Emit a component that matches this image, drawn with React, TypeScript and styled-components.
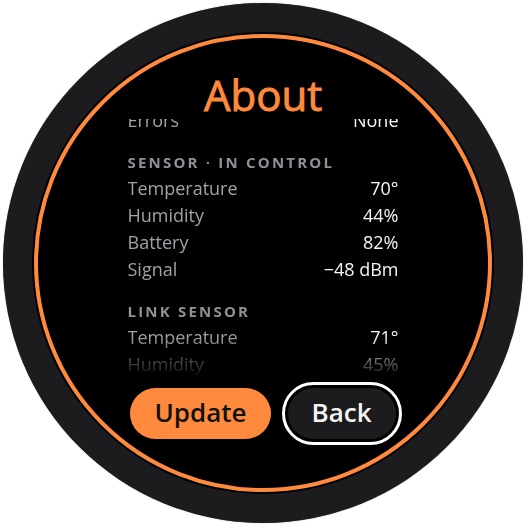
import React, { useLayoutEffect, useRef } from 'react';
import styled, { createGlobalStyle, css } from 'styled-components';

const palette = {
  bezel: '#1c1c1e',
  accent: '#ff8a3d',
  label: '#a0a2a8',
  heading: '#8f9198',
  value: '#f5f5f5',
  ink: '#111111',
};

const GlobalStyle = createGlobalStyle`
  html, body {
    margin: 0;
    padding: 0;
    background: #ffffff;
  }
  body {
    font-family: 'Open Sans', 'Noto Sans', sans-serif;
    -webkit-font-smoothing: antialiased;
  }
`;

const Stage = styled.div`
  width: 526px;
  height: 526px;
  display: flex;
  align-items: center;
  justify-content: center;
`;

const Bezel = styled.div`
  width: 520px;
  height: 520px;
  border-radius: 50%;
  background: ${palette.bezel};
  box-shadow: 0 0 1px rgba(0, 0, 0, 0.5);
  display: flex;
  align-items: center;
  justify-content: center;
`;

const Screen = styled.div`
  box-sizing: border-box;
  width: 458px;
  height: 458px;
  border-radius: 50%;
  border: 4px solid ${palette.accent};
  box-shadow: 0 0 0 2px #000;
  background: #000;
  padding-top: 33px;
  overflow: hidden;
  display: flex;
  flex-direction: column;
  align-items: center;
`;

const Title = styled.h1`
  margin: 0;
  font-size: 42px;
  line-height: 48px;
  font-weight: 500;
  color: ${palette.accent};
  -webkit-text-stroke: 0.9px ${palette.accent};
`;

const ListViewport = styled.div`
  width: 271px;
  height: 261px;
  overflow-y: auto;
  scrollbar-width: none;
  mask-image: linear-gradient(to bottom, #000 calc(100% - 44px), transparent 100%);
  &::-webkit-scrollbar {
    display: none;
  }
`;

const Section = styled.section`
  &:not(:first-child) {
    margin-top: 16px;
  }
`;

const SectionHeading = styled.h2`
  margin: 0;
  height: 25px;
  display: flex;
  align-items: center;
  font-size: 15px;
  font-weight: 700;
  letter-spacing: 2.2px;
  text-transform: uppercase;
  color: ${palette.heading};
`;

const Row = styled.div`
  height: 27px;
  display: flex;
  align-items: center;
  justify-content: space-between;
  font-size: 18px;
`;

const Label = styled.span`
  color: ${palette.label};
`;

const Value = styled.span`
  color: ${palette.value};
  font-weight: 500;
`;

const Actions = styled.div`
  margin-top: 8px;
  display: flex;
  align-items: center;
  gap: 17px;
`;

const Button = styled.button<{ variant: 'primary' | 'secondary'; focused?: boolean }>`
  height: 51px;
  padding: 0 24px 3px;
  border: none;
  border-radius: 26px;
  font-family: inherit;
  font-size: 26px;
  font-weight: 600;
  cursor: pointer;
  ${props =>
    props.variant === 'primary'
      ? css`
          background: ${palette.accent};
          color: ${palette.ink};
        `
      : css`
          background: ${palette.bezel};
          color: ${palette.value};
        `}
  ${props =>
    props.focused &&
    css`
      outline: 3px solid #ffffff;
      outline-offset: 3px;
    `}
`;

interface Reading {
  label: string;
  value: string;
}

interface Group {
  title: string;
  readings: Reading[];
}

const groups: Group[] = [
  {
    title: 'System',
    readings: [
      { label: 'Firmware', value: '2.4.1' },
      { label: 'Uptime', value: '3d 4h' },
      { label: 'Errors', value: 'None' },
    ],
  },
  {
    title: 'Sensor · In Control',
    readings: [
      { label: 'Temperature', value: '70°' },
      { label: 'Humidity', value: '44%' },
      { label: 'Battery', value: '82%' },
      { label: 'Signal', value: '−48 dBm' },
    ],
  },
  {
    title: 'Link Sensor',
    readings: [
      { label: 'Temperature', value: '71°' },
      { label: 'Humidity', value: '45%' },
      { label: 'Battery', value: '77%' },
      { label: 'Signal', value: '−55 dBm' },
    ],
  },
];

const App: React.FC = () => {
  const listRef = useRef<HTMLDivElement>(null);

  useLayoutEffect(() => {
    if (listRef.current) {
      listRef.current.scrollTop = 92;
    }
  }, []);

  return (
    <>
      <GlobalStyle />
      <Stage>
        <Bezel>
          <Screen>
            <Title>About</Title>
            <ListViewport ref={listRef}>
              {groups.map(group => (
                <Section key={group.title}>
                  <SectionHeading>{group.title}</SectionHeading>
                  {group.readings.map(r => (
                    <Row key={r.label}>
                      <Label>{r.label}</Label>
                      <Value>{r.value}</Value>
                    </Row>
                  ))}
                </Section>
              ))}
            </ListViewport>
            <Actions>
              <Button variant='primary'>Update</Button>
              <Button variant='secondary' focused>
                Back
              </Button>
            </Actions>
          </Screen>
        </Bezel>
      </Stage>
    </>
  );
};

export default App;
